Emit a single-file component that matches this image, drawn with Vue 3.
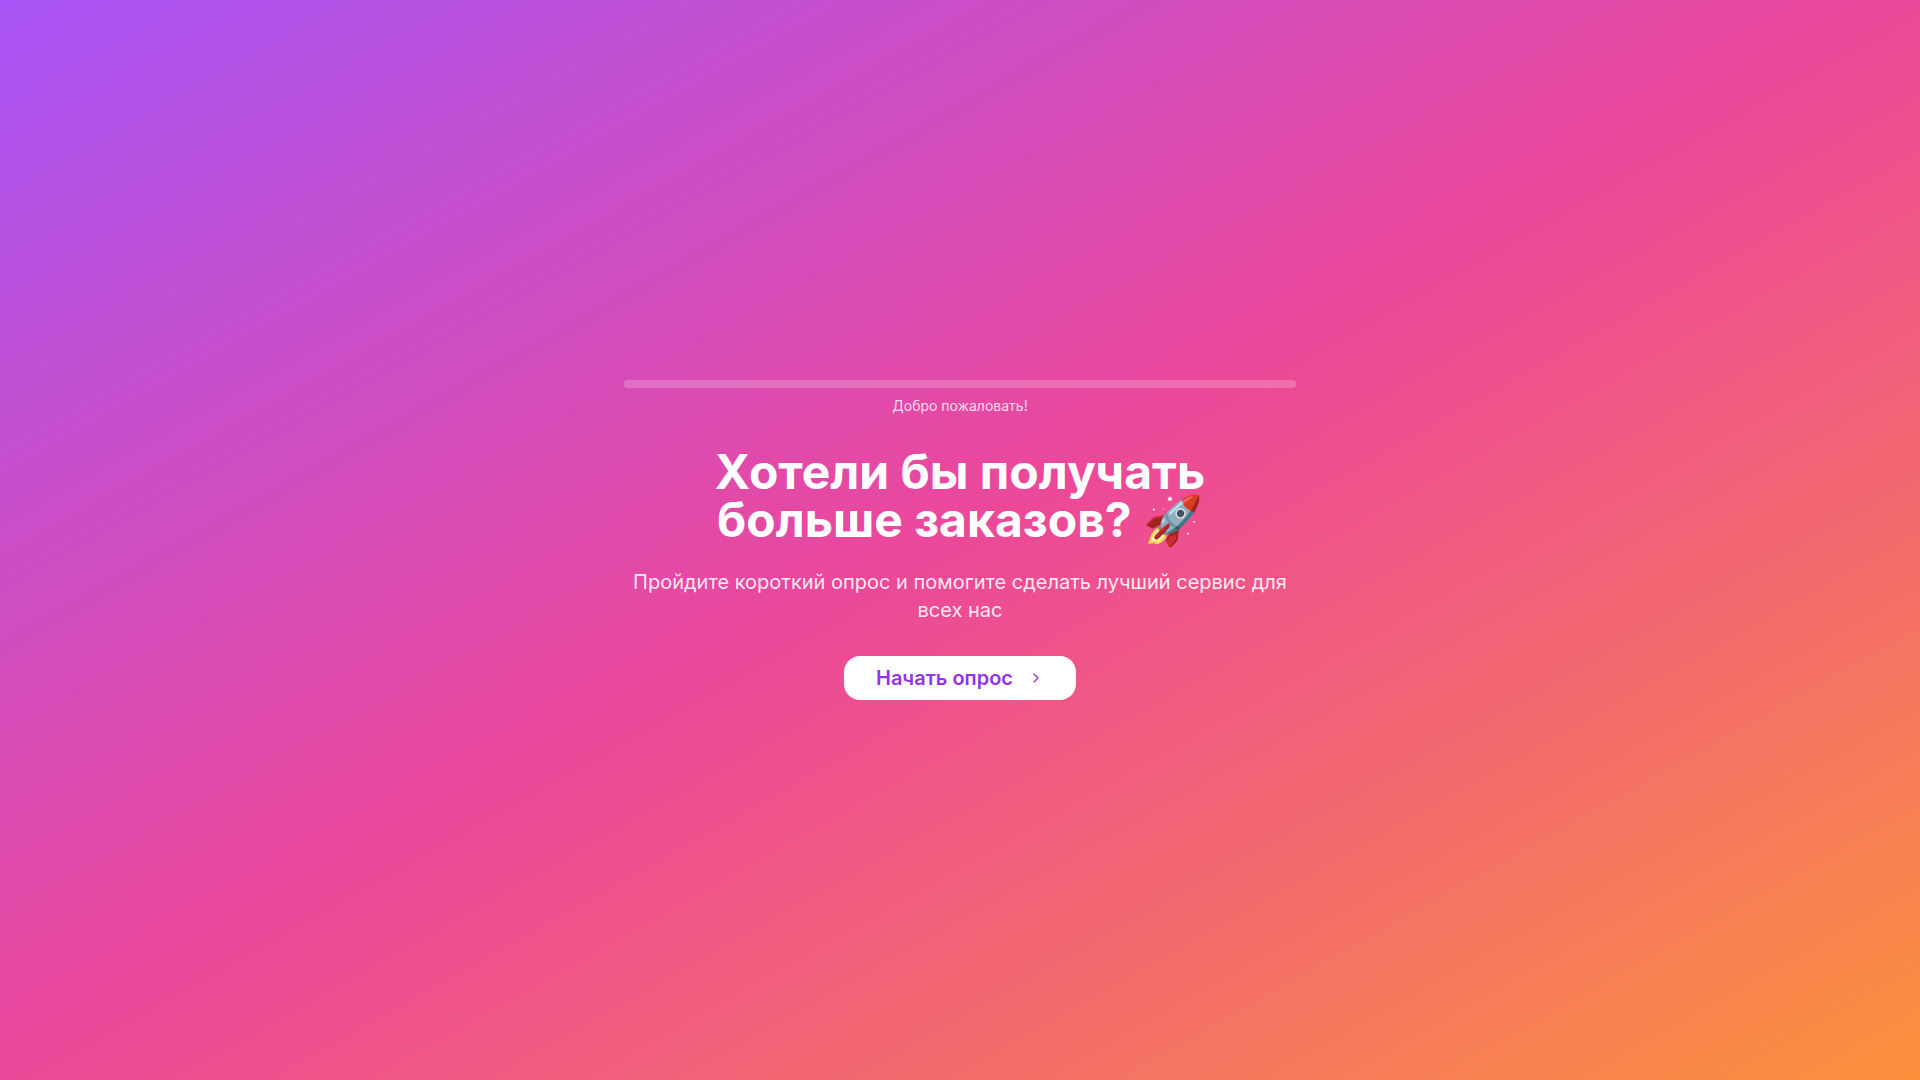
<script setup>
const progress = 0
</script>

<template>
  <main class="page">
    <section class="survey">
      <div class="track" role="progressbar" aria-label="Прогресс" :aria-valuenow="progress">
        <div class="fill" :style="{ width: progress + '%' }"></div>
      </div>
      <p class="status">Добро пожаловать!</p>
      <h1 class="title">Хотели бы получать больше заказов? 🚀</h1>
      <p class="lead">Пройдите короткий опрос и помогите сделать лучший сервис для всех нас</p>
      <button class="start" type="button">
        Начать опрос
        <svg class="chevron" viewBox="0 0 24 24" aria-hidden="true">
          <path d="m9 18 6-6-6-6" />
        </svg>
      </button>
    </section>
  </main>
</template>

<style>
body {
  margin: 0;
}
</style>

<style scoped>
.page {
  box-sizing: border-box;
  min-height: 100vh;
  padding: 16px;
  display: flex;
  align-items: center;
  justify-content: center;
  background: linear-gradient(to bottom right, #a855f7, #ec4899, #fb923c);
  color: #fff;
  font-family: Inter, "Noto Sans", sans-serif;
}

.survey {
  width: 100%;
  max-width: 672px;
  display: flex;
  flex-direction: column;
  align-items: center;
  text-align: center;
}

.track {
  width: 100%;
  height: 8px;
  border-radius: 9999px;
  background: rgba(255, 255, 255, 0.2);
  overflow: hidden;
}

.fill {
  height: 100%;
  background: #fff;
}

.status {
  margin: 8px 0 32px;
  font-size: 14px;
  line-height: 20px;
  font-weight: 400;
  color: rgba(255, 255, 255, 0.8);
}

.title {
  margin: 0 0 24px;
  max-width: 576px;
  font-size: 48px;
  line-height: 48px;
  font-weight: 700;
}

.lead {
  margin: 0 0 32px;
  font-size: 20px;
  line-height: 28px;
  font-weight: 400;
  color: rgba(255, 255, 255, 0.9);
}

.start {
  display: flex;
  align-items: center;
  gap: 15px;
  height: 44px;
  padding: 0 32px;
  border: 0;
  border-radius: 16px;
  background: #fff;
  color: #9333ea;
  font-family: inherit;
  font-size: 20px;
  line-height: 28px;
  font-weight: 600;
  cursor: pointer;
}

.chevron {
  width: 16px;
  height: 16px;
  fill: none;
  stroke: currentColor;
  stroke-width: 2;
  stroke-linecap: round;
  stroke-linejoin: round;
}
</style>
